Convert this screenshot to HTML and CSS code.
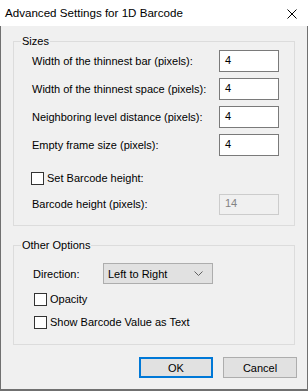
FILE: index.html
```html
<!DOCTYPE html>
<html lang="en">
<head>
  <meta charset="UTF-8">
  <title>Advanced Settings for 1D Barcode</title>
  <link rel="stylesheet" href="styles.css">
</head>
<body>
  <div class="ventana">
    <div class="titulo">
      <span>Advanced Settings for 1D Barcode</span>
      <svg class="cerrar" width="10" height="10" viewBox="0 0 10 10">
        <path d="M0.5 0.5 L9.5 9.5 M9.5 0.5 L0.5 9.5" stroke="#000" stroke-width="1" fill="none"/>
      </svg>
    </div>

    <div class="cuerpo">
      <fieldset class="grupo">
        <legend>Sizes</legend>
        <div class="grupo-body sizes">
          <div class="fila"><span>Width of the thinnest bar (pixels):</span><span class="campo">4</span></div>
          <div class="fila"><span>Width of the thinnest space (pixels):</span><span class="campo">4</span></div>
          <div class="fila"><span>Neighboring level distance (pixels):</span><span class="campo">4</span></div>
          <div class="fila"><span>Empty frame size (pixels):</span><span class="campo">4</span></div>
          <div class="check check-alto"><span class="caja"></span><span>Set Barcode height:</span></div>
          <div class="fila fila-alto"><span>Barcode height (pixels):</span><span class="campo off">14</span></div>
        </div>
      </fieldset>

      <fieldset class="grupo otras">
        <legend>Other Options</legend>
        <div class="grupo-body opciones">
          <div class="fila-dir">
            <span class="etiqueta">Direction:</span>
            <span class="combo">Left to Right
              <svg width="9" height="6" viewBox="0 0 9 6"><path d="M0.5 0.5 L4.5 4.5 L8.5 0.5" stroke="#606060" fill="none"/></svg>
            </span>
          </div>
          <div class="check check-op"><span class="caja"></span><span>Opacity</span></div>
          <div class="check check-show"><span class="caja"></span><span>Show Barcode Value as Text</span></div>
        </div>
      </fieldset>

      <div class="botones">
        <button class="boton defecto">OK</button>
        <button class="boton">Cancel</button>
      </div>
    </div>
  </div>
</body>
</html>
```

FILE: styles.css
```css
body {
  margin: 0;
  font-family: "Liberation Sans", Arial, sans-serif;
  font-size: 11px;
  color: #000;
  background: #f0f0f0;
}

.ventana {
  width: 308px;
  height: 391px;
  box-sizing: border-box;
  display: flex;
  flex-direction: column;
}

.titulo {
  height: 26px;
  background: #fff;
  display: flex;
  align-items: center;
  justify-content: space-between;
  padding: 0 11px 0 5px;
  flex-shrink: 0;
  font-size: 11.6px;
}

.titulo span {
  margin-top: -1px;
}

.cerrar {
  display: block;
  margin-top: 1px;
}

.cuerpo {
  flex: 1;
  background: #f0f0f0;
  border: 1px solid #707070;
  border-top: none;
  border-bottom-width: 2px;
  padding: 7px 12px 0 12px;
}

.grupo {
  margin: 0;
  padding: 0 0 0 7px;
  border: 1px solid #dcdcdc;
  min-width: 0;
}

.grupo legend {
  padding: 0 1px;
  line-height: 16px;
}

.grupo-body {
  display: flex;
  flex-direction: column;
  padding: 1px 15px 10px 11px;
  white-space: nowrap;
}

.fila {
  height: 22px;
  display: flex;
  align-items: center;
  margin-bottom: 6px;
}

.fila > span:first-child {
  flex: 1;
}

.campo {
  flex-shrink: 0;
  width: 60px;
  height: 22px;
  box-sizing: border-box;
  border: 1px solid #7a7a7a;
  background: #fff;
  padding: 3px 0 0 5px;
}

.campo.off {
  border-color: #cccccc;
  background: #f0f0f0;
  color: #838383;
  height: 21px;
  padding-top: 2px;
}

.check {
  height: 18px;
  display: flex;
  align-items: center;
  gap: 3px;
}

.caja {
  flex-shrink: 0;
  width: 13px;
  height: 13px;
  box-sizing: border-box;
  border: 1px solid #333;
  background: #fff;
}

.check-alto {
  margin-top: 5px;
  height: 22px;
  margin-left: -1px;
}

.fila-alto {
  margin-top: 4px;
  margin-bottom: 0;
}

.otras {
  margin-top: 11px;
}

.opciones {
  padding: 10px 0 13px 12px;
}

.fila-dir {
  display: flex;
  align-items: center;
  height: 21px;
}

.etiqueta {
  width: 70px;
}

.combo {
  width: 110px;
  height: 21px;
  box-sizing: border-box;
  border: 1px solid #adadad;
  background: #e1e1e1;
  display: flex;
  align-items: center;
  justify-content: space-between;
  padding: 0 9px 0 4px;
}

.check-op {
  margin-top: 6px;
  margin-left: 1px;
}

.check-show {
  margin-top: 5px;
  margin-left: 1px;
}

.botones {
  display: flex;
  justify-content: flex-end;
  gap: 10px;
  margin-top: 12px;
  margin-right: -2px;
}

.boton {
  width: 74px;
  height: 21px;
  font-family: inherit;
  font-size: 11px;
  color: #000;
  background: #e1e1e1;
  border: 1px solid #adadad;
  padding: 0;
}

.boton.defecto {
  border: 2px solid #0078d7;
}
```
